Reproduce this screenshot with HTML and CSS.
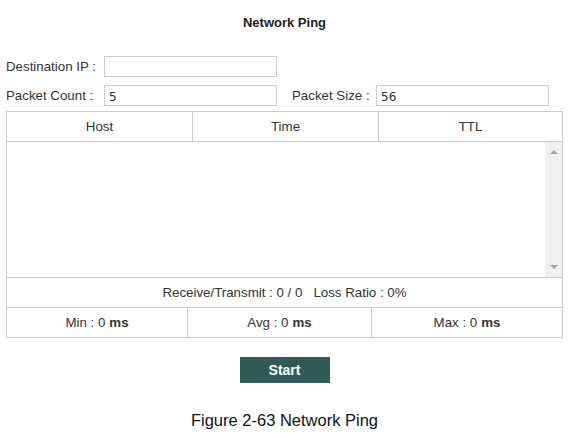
FILE: index.html
```html
<!DOCTYPE html>
<html>
<head>
    <title>Network Ping</title>
    <link rel="stylesheet" href="styles.css">
</head>
<body>
    <div id="page">
        <h1 class="title">Network Ping</h1>
        <div class="form-row">
            <label class="field-label">Destination IP :</label>
            <input class="field-input" type="text" value="">
        </div>
        <div class="form-row">
            <label class="field-label">Packet Count :</label>
            <input class="field-input" type="text" value="5">
            <label class="field-label second">Packet Size :</label>
            <input class="field-input" type="text" value="56">
        </div>
        <div class="ping-table">
            <div class="table-head">
                <div class="cell">Host</div>
                <div class="cell">Time</div>
                <div class="cell">TTL</div>
            </div>
            <div class="table-body">
                <div class="rows"></div>
                <div class="scrollbar">
                    <span class="arrow up"></span>
                    <span class="arrow down"></span>
                </div>
            </div>
            <div class="summary">Receive/Transmit : 0 / 0&nbsp;&nbsp; Loss Ratio : 0%</div>
            <div class="stats">
                <div class="cell">Min : 0 <b>ms</b></div>
                <div class="cell">Avg : 0 <b>ms</b></div>
                <div class="cell">Max : 0 <b>ms</b></div>
            </div>
        </div>
        <div class="actions">
            <button class="start-btn">Start</button>
        </div>
        <p class="caption">Figure 2-63 Network Ping</p>
    </div>
</body>
</html>
```

FILE: styles.css
```css
body {
    margin: 0;
    background: #fff;
    font-family: "Liberation Sans", Arial, sans-serif;
    font-size: 13.3px;
    color: #333;
}
#page {
    width: 557px;
    padding: 15px 0 0 6px;
}
.title {
    margin: 0 0 25px 0;
    font-size: 13px;
    line-height: 16px;
    font-weight: bold;
    text-align: center;
    color: #222;
}
.form-row {
    display: flex;
    align-items: center;
    height: 21px;
    margin-bottom: 8px;
}
.form-row + .form-row {
    margin-bottom: 5px;
}
.field-label {
    width: 98px;
}
.field-label.second {
    width: 84px;
    margin-left: 15px;
}
.field-input {
    box-sizing: border-box;
    width: 173px;
    height: 21px;
    margin: 0;
    padding: 2px 4px 0;
    border: 1px solid #ccc;
    font-family: "DejaVu Sans", Verdana, sans-serif;
    font-size: 12px;
    color: #333;
    outline: none;
}
.ping-table {
    border: 1px solid #ccc;
}
.table-head {
    display: grid;
    grid-template-columns: 185px 186px 1fr;
    height: 29px;
    border-bottom: 1px solid #ccc;
}
.cell {
    display: flex;
    align-items: center;
    justify-content: center;
}
.table-head .cell + .cell,
.stats .cell + .cell {
    border-left: 1px solid #ccc;
}
.table-body {
    display: flex;
    height: 135px;
    border-bottom: 1px solid #ccc;
}
.rows {
    flex: 1;
}
.scrollbar {
    position: relative;
    width: 17px;
    background: #f1f1f1;
}
.arrow {
    position: absolute;
    left: 5px;
    width: 0;
    height: 0;
    border-left: 4px solid transparent;
    border-right: 4px solid transparent;
}
.arrow.up {
    top: 8px;
    border-bottom: 4px solid #a3a3a3;
}
.arrow.down {
    bottom: 8px;
    border-top: 4px solid #a3a3a3;
}
.summary {
    height: 29px;
    line-height: 29px;
    text-align: center;
    border-bottom: 1px solid #ccc;
}
.stats {
    display: grid;
    grid-template-columns: 180px 184px 1fr;
    height: 29px;
}
.stats b {
    margin-left: 4px;
}
.actions {
    display: flex;
    justify-content: center;
    margin-top: 19px;
}
.start-btn {
    width: 90px;
    height: 26px;
    padding: 0;
    border: none;
    background: #2f5a56;
    color: #fff;
    font-family: "Liberation Sans", Arial, sans-serif;
    font-size: 14px;
    font-weight: bold;
}
.caption {
    margin: 27px 0 0 0;
    font-size: 16.5px;
    line-height: 20px;
    text-align: center;
    color: #111;
}
```
